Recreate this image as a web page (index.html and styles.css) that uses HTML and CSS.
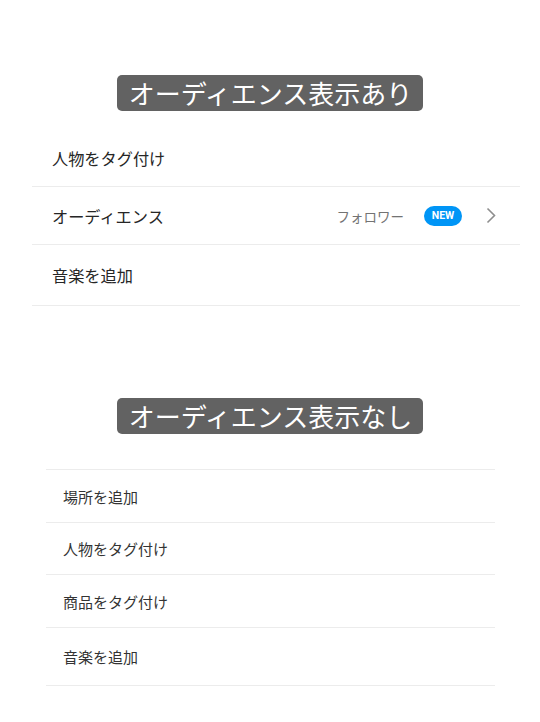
FILE: index.html
```html
<!DOCTYPE html>
<html lang="ja">
<head>
<meta charset="utf-8"/>
<title>オーディエンス表示</title>
<link rel="stylesheet" href="styles.css">
<meta content="width=device-width, initial-scale=1.0" name="viewport"/>
</head>
<body>
<div class="caption caption-first"><span>オーディエンス表示あり</span></div>
<ul class="menu menu-wide">
  <li class="row row-1">人物をタグ付け</li>
  <li class="row row-2">
    <span class="row-title">オーディエンス</span>
    <span class="row-value">フォロワー</span>
    <span class="badge">NEW</span>
    <svg class="chevron" width="10" height="17" viewBox="0 0 10 17"><polyline points="1.5,1.5 8.5,8.5 1.5,15.5" fill="none" stroke="#8e8e8e" stroke-width="1.6"/></svg>
  </li>
  <li class="row row-3">音楽を追加</li>
</ul>
<div class="caption caption-second"><span>オーディエンス表示なし</span></div>
<ul class="menu menu-narrow">
  <li class="row">場所を追加</li>
  <li class="row row-short">人物をタグ付け</li>
  <li class="row">商品をタグ付け</li>
  <li class="row row-last">音楽を追加</li>
</ul>
</body>
</html>
```

FILE: styles.css
```css
body {
  margin: 0;
  background: #fff;
  font-family: "Noto Sans CJK JP", "Noto Sans", sans-serif;
  color: #262626;
}
.caption {
  text-align: center;
}
.caption span {
  display: inline-block;
  background: #626262;
  color: #fff;
  font-size: 26px;
  line-height: 36px;
  height: 36px;
  padding: 0 11px 0 12px;
  border-radius: 5px;
}
.caption-first { padding-top: 75px; }
.caption-second { margin-top: 92px; }
.menu {
  list-style: none;
  margin: 0;
  padding: 0;
}
.row {
  display: flex;
  align-items: center;
  border-bottom: 1px solid #ececec;
  box-sizing: border-box;
}
.menu-wide {
  margin: 18px 20px 0 32px;
}
.menu-wide .row {
  font-size: 16.2px;
  padding-left: 20px;
  padding-right: 24px;
  height: 58px;
}
.menu-wide .row-3 { height: 61px; }
.row-title { flex: 1; }
.row-value {
  font-size: 13.5px;
  color: #737373;
}
.badge {
  margin-left: 20px;
  width: 38px;
  height: 20px;
  border-radius: 10px;
  background: #0095f6;
  color: #fff;
  font-family: Roboto, "Liberation Sans", sans-serif;
  font-weight: bold;
  font-size: 10.5px;
  line-height: 20px;
  text-align: center;
}
.chevron {
  margin-left: 24px;
}
.menu-narrow {
  margin: 35px 45px 0 46px;
  border-top: 1px solid #ececec;
}
.menu-narrow .row {
  font-size: 15px;
  color: #333;
  padding-left: 17px;
  height: 53px;
}
.menu-narrow .row-short { height: 52px; }
.menu-narrow .row-last { height: 58px; }
```
